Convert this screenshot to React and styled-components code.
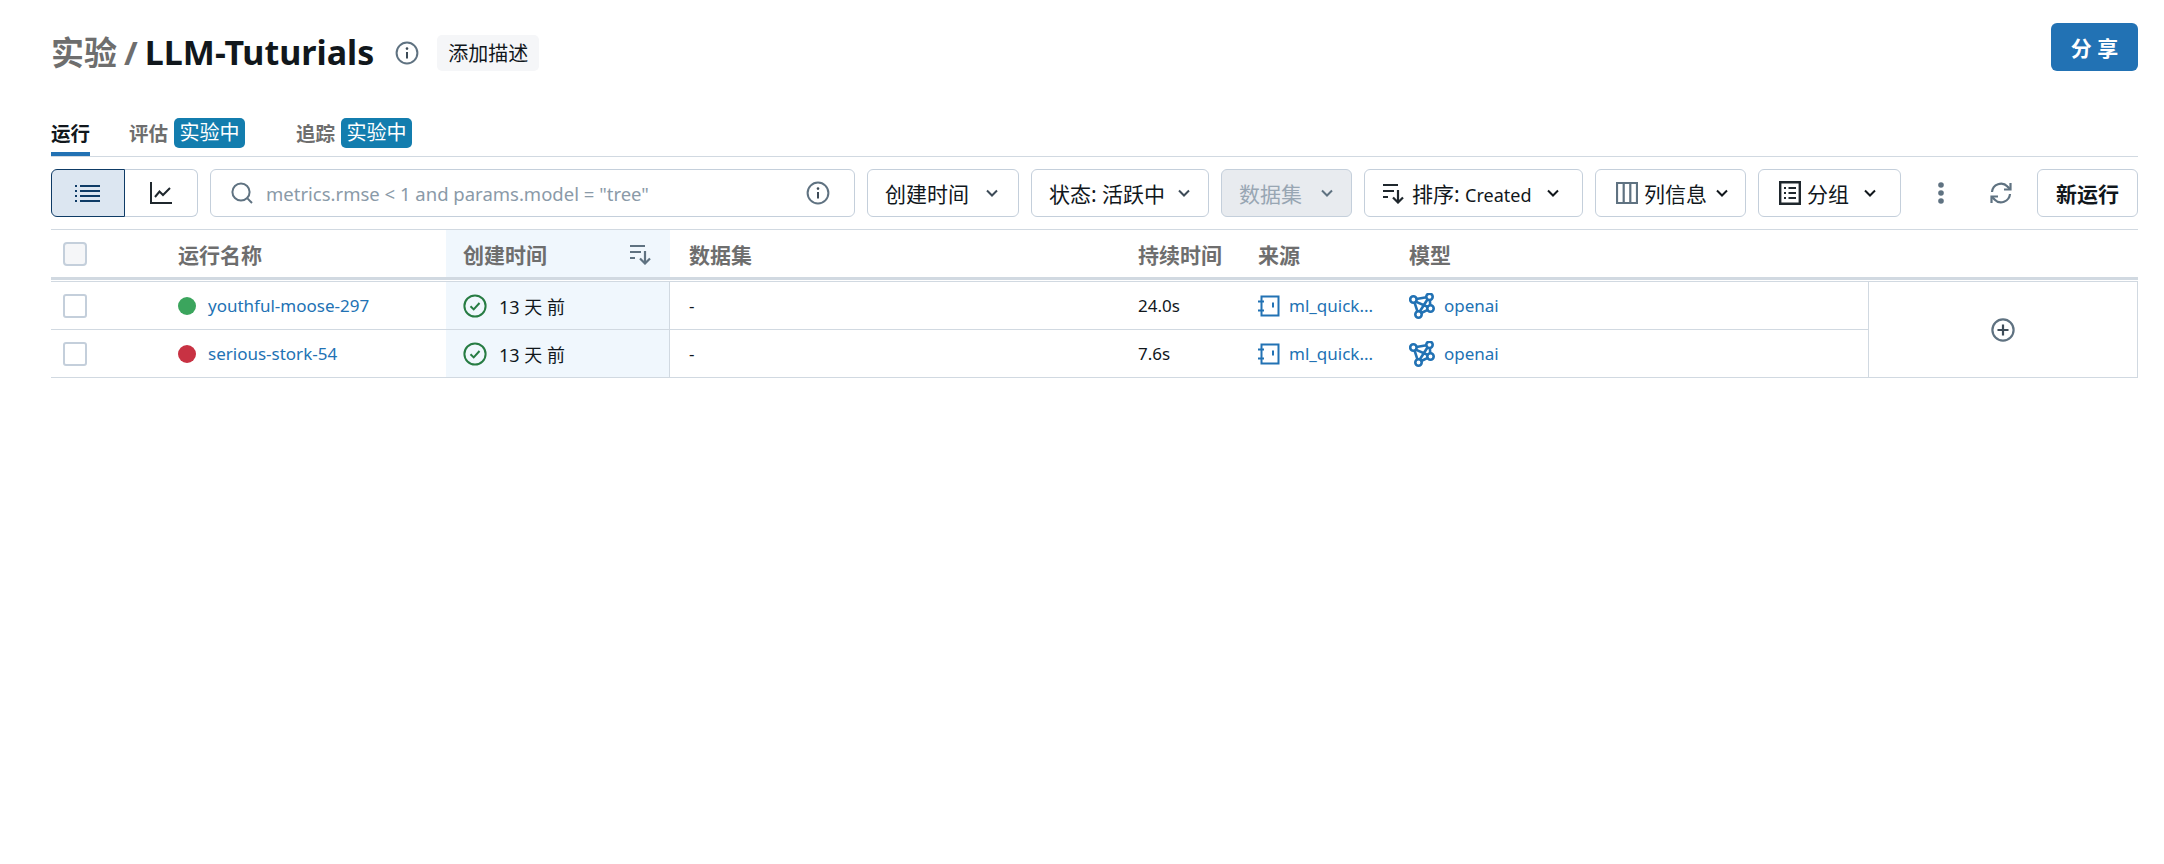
import styled, { createGlobalStyle } from "styled-components";

const GlobalStyle = createGlobalStyle`
    html, body {
        margin: 0;
        padding: 0;
        background: #fff;
    }
    body {
        font-family: "Noto Sans", "Noto Sans CJK SC", sans-serif;
        font-size: 17px;
        color: #11171c;
    }
`;

const LINE = "#d1d9e1";
const CONTROL = "#c4cfdb";
const ICON_GREY = "#5f7281";
const LINK = "#2272b4";

const SearchIcon = () => (
    <svg width="24" height="24" viewBox="0 0 24 24" fill="none" stroke={ICON_GREY} strokeWidth="2">
        <circle cx="11" cy="11" r="8.6" />
        <path d="M17.4 17.4 22 22" />
    </svg>
);

const InfoIcon = ({ size = 24 }) => (
    <svg width={size} height={size} viewBox="0 0 24 24" fill="none" stroke={ICON_GREY} strokeWidth="2">
        <circle cx="12" cy="12" r="10.4" />
        <path d="M12 11v6.5" stroke="#3d4b57" />
        <circle cx="12" cy="7.6" r="1.3" fill="#3d4b57" stroke="none" />
    </svg>
);

const Chevron = ({ color = "#11171c" }) => (
    <svg width="14" height="10" viewBox="0 0 14 10" fill="none" stroke={color} strokeWidth="2">
        <path d="M2 2.5 7 7.5 12 2.5" />
    </svg>
);

const ListIcon = () => (
    <svg width="26" height="20" viewBox="0 0 26 20" fill="none" stroke="#0e3b66" strokeWidth="2">
        <path d="M5 3h20M5 8h20M5 13h20M5 18h20" />
        <path d="M0 3h2M0 8h2M0 13h2M0 18h2" />
    </svg>
);

const ChartIcon = () => (
    <svg width="24" height="24" viewBox="0 0 24 24" fill="none" stroke="#1f272d" strokeWidth="2">
        <path d="M2 1v21h21" />
        <path d="M6 16 10.5 10.5 14 14 21 7" />
    </svg>
);

const SortIcon = ({ color = "#1f272d", arrow = "#1f272d" }) => (
    <svg width="24" height="22" viewBox="0 0 24 22" fill="none" strokeWidth="2.2">
        <path d="M1 3h15M1 9h11M1 15h5" stroke={color} />
        <path d="M16 8v12M11 15.5l5 5 5-5" stroke={arrow} />
    </svg>
);

const ColumnsIcon = () => (
    <svg width="22" height="24" viewBox="0 0 22 24" fill="none" stroke={ICON_GREY} strokeWidth="2.2">
        <path d="M1 2h20v20H1zM7.7 2v20M14.3 2v20" />
    </svg>
);

const GroupIcon = () => (
    <svg width="22" height="24" viewBox="0 0 22 24" fill="none" stroke="#1f272d" strokeWidth="2">
        <path d="M1.2 1.2h19.6v21.6H1.2z" strokeWidth="2.4" />
        <path d="M5 7h2M9.5 7H17M5 12h2M9.5 12H17M5 17h2M9.5 17H17" />
    </svg>
);

const KebabIcon = () => (
    <svg width="8" height="24" viewBox="0 0 8 24" fill={ICON_GREY}>
        <circle cx="4" cy="4" r="2.8" />
        <circle cx="4" cy="12" r="2.8" />
        <circle cx="4" cy="20" r="2.8" />
    </svg>
);

const RefreshIcon = () => (
    <svg width="24" height="24" viewBox="0 0 24 24" fill="none" stroke={ICON_GREY} strokeWidth="2.2">
        <path d="M3 11a9 9 0 0 1 15.5-5.4L21 8" />
        <path d="M21.5 2v6.5H15" />
        <path d="M21 13a9 9 0 0 1-15.5 5.4L3 16" />
        <path d="M2.5 22v-6.5H9" />
    </svg>
);

const CheckCircleIcon = () => (
    <svg width="24" height="24" viewBox="0 0 24 24" fill="none" stroke="#277c43" strokeWidth="2">
        <circle cx="12" cy="12" r="10.6" />
        <path d="M7.5 12.3 10.7 15.4 16.5 9" />
    </svg>
);

const NotebookIcon = () => (
    <svg width="22" height="22" viewBox="0 0 22 22" fill="none" stroke={LINK} strokeWidth="2">
        <path d="M3.5 1.5h17v19h-17z" />
        <path d="M0 6.5h6M0 15.5h6" />
        <path d="M15 7.5v5" />
    </svg>
);

const ModelIcon = () => (
    <svg width="26" height="26" viewBox="0 0 26 26" fill="none" stroke={LINK} strokeWidth="2.6">
        <circle cx="4.4" cy="6.5" r="3.2" />
        <circle cx="20.5" cy="3.8" r="3.2" />
        <circle cx="21.5" cy="15.5" r="3.2" />
        <circle cx="9.5" cy="21.5" r="3.2" />
        <path d="M7.4 6 17.5 4.3M6.7 8.6 19 14M5.5 9.4l3 9.2M20.8 6.8l.5 5.7M12.2 20l6.6-3.2M18.6 6.2 10.6 18.8" />
    </svg>
);

const PlusCircleIcon = () => (
    <svg width="24" height="24" viewBox="0 0 24 24" fill="none" stroke={ICON_GREY} strokeWidth="2.2">
        <circle cx="12" cy="12" r="10.6" />
        <path d="M12 6.5v11M6.5 12h11" stroke="#3d4b57" />
    </svg>
);

const runs = [
    { name: "youthful-moose-297", status: "#3ba55d", duration: "24.0s" },
    { name: "serious-stork-54", status: "#c83243", duration: "7.6s" },
];

export default function App() {
    return (
        <Page>
            <GlobalStyle />
            <Header>
                <TitleGroup>
                    <Title>
                        <Crumb>实验 / </Crumb>LLM-Tuturials
                    </Title>
                    <InfoIcon />
                    <DescButton>添加描述</DescButton>
                </TitleGroup>
                <ShareButton>分 享</ShareButton>
            </Header>

            <Tabs>
                <Tab $active>运行</Tab>
                <Tab $wide>
                    评估<Badge>实验中</Badge>
                </Tab>
                <Tab>
                    追踪<Badge>实验中</Badge>
                </Tab>
            </Tabs>

            <Toolbar>
                <Segmented>
                    <Segment $active><ListIcon /></Segment>
                    <Segment><ChartIcon /></Segment>
                </Segmented>
                <SearchBox>
                    <SearchIcon />
                    <SearchText>metrics.rmse &lt; 1 and params.model = "tree"</SearchText>
                    <InfoIcon />
                </SearchBox>
                <Control $w={152} $pr={19}>创建时间<Chevron color="#3d4b57" /></Control>
                <Control $w={178}>状态: 活跃中<Chevron color="#3d4b57" /></Control>
                <Control $w={131} $disabled>数据集<Chevron color="#5f7281" /></Control>
                <Control $w={219} $pr={22}>
                    <Inline>
                        <SortIcon />
                        <span>排序: <Latin>Created</Latin></span>
                    </Inline>
                    <Chevron />
                </Control>
                <Control $w={151} $pl={20} $pr={16}>
                    <Inline><ColumnsIcon />列信息</Inline>
                    <Chevron />
                </Control>
                <Control $w={143} $pl={20} $pr={23}>
                    <Inline><GroupIcon />分组</Inline>
                    <Chevron />
                </Control>
                <IconButton $w={56}><KebabIcon /></IconButton>
                <IconButton $w={40} $mr={4}><RefreshIcon /></IconButton>
                <NewRunButton>新运行</NewRunButton>
            </Toolbar>

            <TableHead>
                <HeadCell><HeadCheckbox /></HeadCell>
                <HeadCell>运行名称</HeadCell>
                <HeadCell $sorted>创建时间<SortIcon color={ICON_GREY} arrow={ICON_GREY} /></HeadCell>
                <HeadCell $dataset>数据集</HeadCell>
                <HeadCell>持续时间</HeadCell>
                <HeadCell>来源</HeadCell>
                <HeadCell>模型</HeadCell>
                <HeadCell />
            </TableHead>

            <TableBody>
                <Rows>
                    {runs.map((run) => (
                        <Row key={run.name}>
                            <Cell><RowCheckbox /></Cell>
                            <Cell>
                                <StatusDot style={{ background: run.status }} />
                                <RunLink>{run.name}</RunLink>
                            </Cell>
                            <Cell $sorted><CheckCircleIcon />13 天 前</Cell>
                            <Cell $dataset>-</Cell>
                            <Cell>{run.duration}</Cell>
                            <Cell $gap={9}><NotebookIcon /><RunLink>ml_quick...</RunLink></Cell>
                            <Cell $gap={9}><ModelIcon /><RunLink>openai</RunLink></Cell>
                        </Row>
                    ))}
                </Rows>
                <AddColumn><PlusCircleIcon /></AddColumn>
            </TableBody>
        </Page>
    );
}

const COLUMNS = "115px 280px 224px 456px 120px 151px 471px";

const Page = styled.div`
    box-sizing: border-box;
    width: 2164px;
    min-height: 864px;
    padding: 23px 26px 0 51px;
    background: #fff;
`;

const Header = styled.header`
    display: flex;
    justify-content: space-between;
    align-items: flex-start;
    height: 48px;
`;

const TitleGroup = styled.div`
    display: flex;
    align-items: center;
    gap: 21px;
    margin-top: 7px;
`;

const Title = styled.h1`
    margin: 0;
    font-size: 34px;
    line-height: 44px;
    font-weight: 700;
    color: #11171c;
    word-spacing: -1.5px;
    white-space: nowrap;
`;

const Crumb = styled.span`
    color: #6e6e6e;
    font-size: 33px;
`;

const DescButton = styled.button`
    height: 36px;
    width: 102px;
    margin-left: -3px;
    padding: 0;
    border: 0;
    border-radius: 5px;
    background: #f5f6f8;
    color: #11171c;
    font: inherit;
    font-size: 20px;
`;

const ShareButton = styled.button`
    width: 87px;
    height: 48px;
    border: 0;
    border-radius: 6px;
    background: #2272b4;
    color: #fff;
    font: inherit;
    font-size: 21px;
    font-weight: 700;
`;

const Tabs = styled.nav`
    display: flex;
    gap: 40px;
    height: 38px;
    margin-top: 47px;
    border-bottom: 1px solid ${LINE};
`;

const Tab = styled.div`
    display: flex;
    align-items: flex-start;
    gap: 6px;
    height: 38px;
    box-sizing: border-box;
    margin-right: ${(p) => (p.$wide ? "11px" : "0")};
    border-bottom: ${(p) => (p.$active ? `4px solid ${LINK}` : "0")};
    font-size: 19.5px;
    line-height: 32px;
    font-weight: 700;
    color: ${(p) => (p.$active ? "#11171c" : "#6e6e6e")};
    &:nth-child(2) {
        margin-left: -1px;
    }
`;

const Badge = styled.span`
    width: 71px;
    height: 30px;
    border-radius: 5px;
    background: #137dae;
    color: #fff;
    font-size: 20px;
    font-weight: 400;
    line-height: 30px;
    text-align: center;
`;

const Toolbar = styled.div`
    display: flex;
    gap: 12px;
    height: 48px;
    margin-top: 12px;
`;

const Segmented = styled.div`
    display: flex;
    width: 147px;
`;

const Segment = styled.div`
    display: flex;
    flex: 1;
    align-items: center;
    justify-content: center;
    box-sizing: border-box;
    border: 1px solid ${(p) => (p.$active ? "#0e3b66" : CONTROL)};
    border-left-width: ${(p) => (p.$active ? "1px" : "0")};
    border-radius: ${(p) => (p.$active ? "6px 0 0 6px" : "0 6px 6px 0")};
    background: ${(p) => (p.$active ? "#dce6f1" : "#fff")};
`;

const SearchBox = styled.div`
    display: flex;
    align-items: center;
    gap: 12px;
    box-sizing: border-box;
    width: 645px;
    padding: 0 24px 0 19px;
    border: 1px solid ${CONTROL};
    border-radius: 6px;
`;

const SearchText = styled.span`
    flex: 1;
    color: #8a9aa8;
    font-size: 18.5px;
    white-space: nowrap;
`;

const Control = styled.div`
    display: flex;
    align-items: center;
    justify-content: space-between;
    box-sizing: border-box;
    width: ${(p) => p.$w}px;
    padding: 0 ${(p) => p.$pr || 17}px 0 ${(p) => p.$pl || 17}px;
    border: 1px solid ${CONTROL};
    border-radius: 6px;
    background: ${(p) => (p.$disabled ? "#e8ebef" : "#fff")};
    color: ${(p) => (p.$disabled ? "#98a6b3" : "#11171c")};
    font-size: 21px;
    white-space: nowrap;
`;

const Latin = styled.span`
    font-size: 18px;
`;

const Inline = styled.span`
    display: flex;
    align-items: center;
    gap: 6px;
`;

const IconButton = styled.div`
    display: flex;
    align-items: center;
    justify-content: center;
    width: ${(p) => p.$w}px;
    margin-right: ${(p) => p.$mr || 0}px;
`;

const NewRunButton = styled.button`
    width: 101px;
    border: 1px solid ${CONTROL};
    border-radius: 6px;
    background: #fff;
    color: #11171c;
    font: inherit;
    font-size: 21px;
    font-weight: 700;
`;

const TableHead = styled.div`
    display: grid;
    grid-template-columns: ${COLUMNS} 1fr;
    box-sizing: border-box;
    height: 51px;
    margin-top: 12px;
    border-top: 1px solid ${LINE};
    border-bottom: 3px solid ${LINE};
`;

const HeadCell = styled.div`
    display: flex;
    align-items: center;
    justify-content: ${(p) => (p.$sorted ? "space-between" : "flex-start")};
    padding: ${(p) => (p.$sorted ? "0 17px" : p.$dataset ? "0 0 0 19px" : "0 0 0 12px")};
    background: ${(p) => (p.$sorted ? "#f0f7fd" : "transparent")};
    color: #6e6e6e;
    font-size: 21px;
    font-weight: 700;
`;

const TableBody = styled.div`
    display: flex;
    margin-top: 1px;
    border-top: 1px solid ${LINE};
`;

const Rows = styled.div`
    width: 1817px;
`;

const Row = styled.div`
    display: grid;
    grid-template-columns: ${COLUMNS};
    height: 48px;
    box-sizing: border-box;
    border-bottom: 1px solid ${LINE};
`;

const Cell = styled.div`
    display: flex;
    align-items: center;
    gap: ${(p) => (p.$gap ? `${p.$gap}px` : "12px")};
    padding-left: ${(p) => (p.$sorted ? "17px" : p.$dataset ? "19px" : "12px")};
    background: ${(p) => (p.$sorted ? "#f0f7fd" : "transparent")};
    border-right: ${(p) => (p.$sorted ? `1px solid ${LINE}` : "0")};
    font-size: ${(p) => (p.$sorted ? "18px" : "17px")};
    white-space: nowrap;
`;

const HeadCheckbox = styled.div`
    width: 24px;
    height: 24px;
    box-sizing: border-box;
    border: 2px solid ${CONTROL};
    border-radius: 4px;
    background: #f5f6f8;
`;

const RowCheckbox = styled.div`
    width: 24px;
    height: 24px;
    box-sizing: border-box;
    border: 2px solid ${CONTROL};
    border-radius: 3px;
    background: #fff;
`;

const StatusDot = styled.span`
    width: 18px;
    height: 18px;
    border-radius: 50%;
`;

const RunLink = styled.span`
    color: ${LINK};
`;

const AddColumn = styled.div`
    display: flex;
    flex: 1;
    align-items: center;
    justify-content: center;
    box-sizing: border-box;
    border-left: 1px solid ${LINE};
    border-right: 1px solid ${LINE};
    border-bottom: 1px solid ${LINE};
`;
